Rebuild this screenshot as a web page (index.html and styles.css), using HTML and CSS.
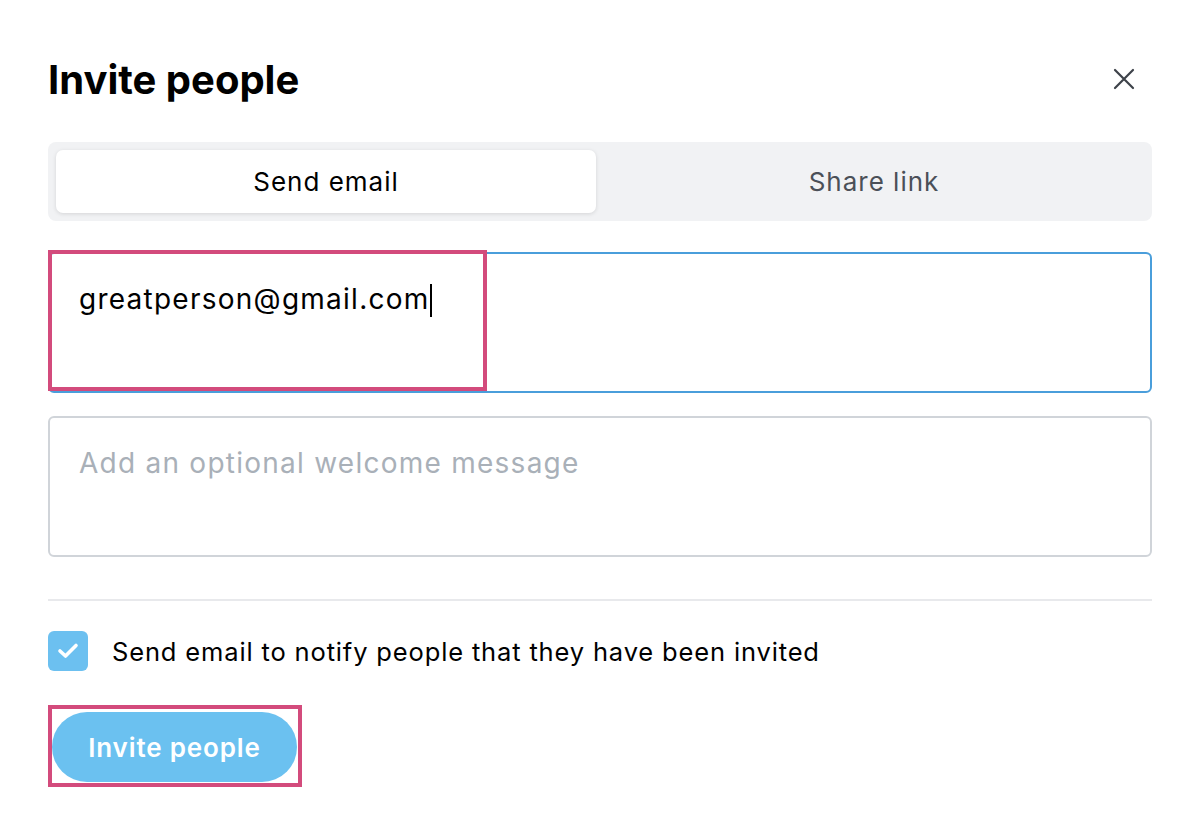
FILE: index.html
```html
<!DOCTYPE html>
<html lang="en">
<head>
  <meta charset="UTF-8">
  <meta name="viewport" content="width=device-width, initial-scale=1.0">
  <title>Invite people</title>
  <link rel="stylesheet" href="styles.css">
</head>
<body>
  <div class="dialog">
    <!-- Header -->
    <div class="header">
      <h1 class="title">Invite people</h1>
      <button class="close" aria-label="Close">
        <svg width="22" height="22" viewBox="0 0 22 22">
          <path d="M2 2 L20 20 M20 2 L2 20" stroke="#3d4249" stroke-width="2.2" stroke-linecap="round" fill="none"/>
        </svg>
      </button>
    </div>

    <!-- Tabs -->
    <div class="tabs">
      <div class="tab active">Send email</div>
      <div class="tab">Share link</div>
    </div>

    <!-- Email field -->
    <div class="field-wrap">
      <div class="field focused">greatperson@gmail.com<span class="caret"></span></div>
      <div class="highlight email-mark"></div>
    </div>

    <div class="field placeholder">Add an optional welcome message</div>

    <div class="divider"></div>

    <label class="check-row">
      <span class="checkbox">
        <svg width="22" height="18" viewBox="0 0 22 18">
          <path d="M3 9 L8.5 14 L19 3.5" stroke="#fff" stroke-width="3.6" stroke-linecap="round" stroke-linejoin="round" fill="none"/>
        </svg>
      </span>
      Send email to notify people that they have been invited
    </label>

    <div class="button-wrap">
      <button class="invite">Invite people</button>
      <div class="highlight button-mark"></div>
    </div>
  </div>
</body>
</html>
```

FILE: styles.css
```css
body {
  margin: 0;
  background: #fff;
  font-family: Inter, "Noto Sans", sans-serif;
  color: #000;
}

.dialog {
  padding: 49px 48px 0 48px;
}

/* Header */
.header {
  display: flex;
  align-items: center;
  justify-content: space-between;
  height: 60px;
  margin-bottom: 33px;
}

.title {
  margin: 0;
  font-size: 40px;
  font-weight: 700;
}

.close {
  border: none;
  background: none;
  padding: 0;
  margin-right: 17px;
  display: flex;
}

/* Tabs */
.tabs {
  display: flex;
  background: #f1f2f4;
  border-radius: 8px;
  padding: 8px;
  gap: 8px;
}

.tab {
  flex: 1;
  height: 63px;
  display: flex;
  align-items: center;
  justify-content: center;
  font-size: 26px;
  letter-spacing: 1px;
  color: #4b5058;
  border-radius: 7px;
}

.tab.active {
  background: #fff;
  color: #000;
  box-shadow: 0 1px 4px rgba(0, 0, 0, 0.12);
}

/* Fields */
.field-wrap {
  position: relative;
  margin-top: 31px;
}

.field {
  box-sizing: border-box;
  height: 141px;
  border: 2px solid #d0d4d9;
  border-radius: 6px;
  padding: 27px 29px;
  font-size: 28px;
  letter-spacing: 1.25px;
  line-height: 36px;
}

.field.focused {
  border-color: #4a9edb;
}

.field.placeholder {
  margin-top: 23px;
  color: #a9b0b8;
}

.caret {
  display: inline-block;
  width: 2px;
  height: 33px;
  background: #000;
  vertical-align: -8px;
}

/* Annotation boxes */
.highlight {
  position: absolute;
  border: 4px solid #d34b7c;
  box-sizing: border-box;
}

.email-mark {
  left: 0;
  top: -2px;
  width: 439px;
  height: 141px;
}

.divider {
  height: 2px;
  background: #e8e9ec;
  margin-top: 42px;
}

/* Checkbox */
.check-row {
  display: flex;
  align-items: center;
  gap: 24px;
  margin-top: 30px;
  font-size: 25.5px;
  letter-spacing: 0.85px;
}

.checkbox {
  width: 40px;
  height: 40px;
  border-radius: 6px;
  background: #6cc0f0;
  display: flex;
  align-items: center;
  justify-content: center;
}

/* Button */
.button-wrap {
  position: relative;
  margin-top: 41px;
  padding-left: 4px;
  height: 82px;
}

.invite {
  border: none;
  background: #6bc1f0;
  color: #fff;
  font-family: Inter, "Noto Sans", sans-serif;
  font-size: 26px;
  letter-spacing: 0.85px;
  font-weight: 600;
  width: 245px;
  height: 70px;
  border-radius: 35px;
}

.button-mark {
  left: 0;
  top: -7px;
  width: 254px;
  height: 82px;
}
```
